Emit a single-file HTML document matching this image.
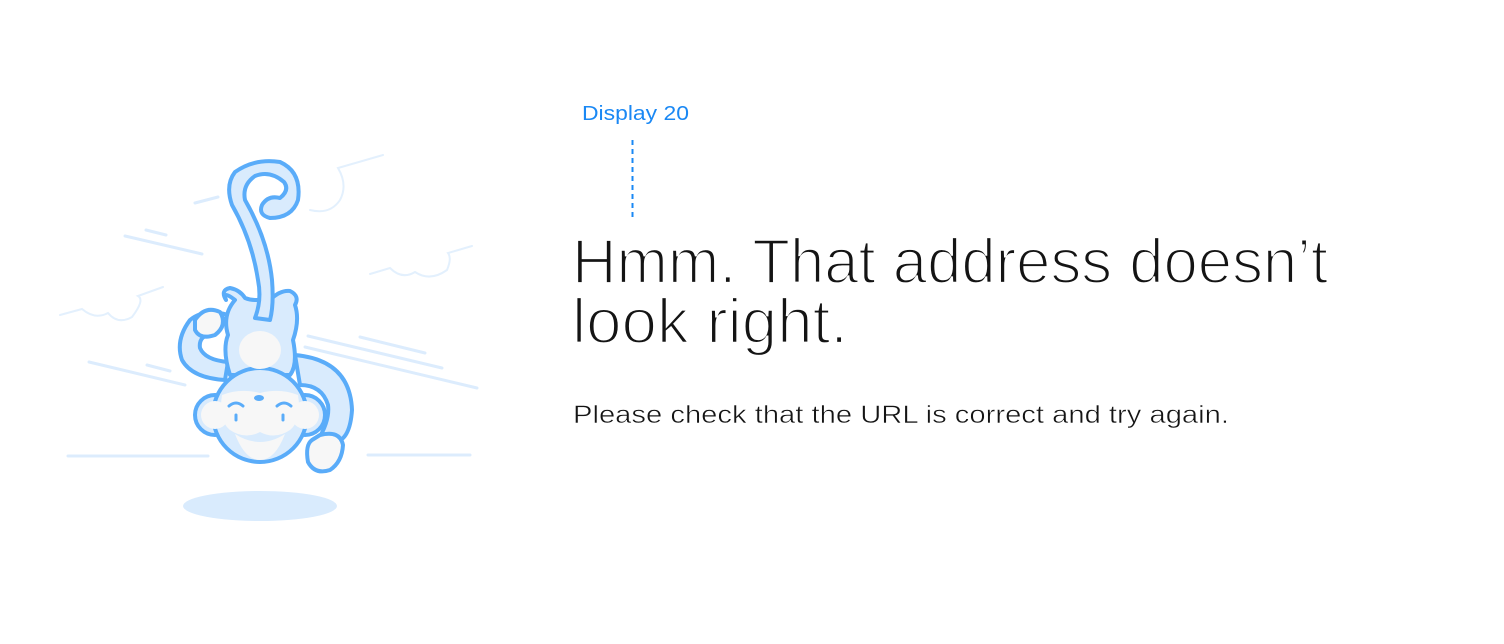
<!DOCTYPE html>
<html><head><meta charset="utf-8"><style>
html,body{margin:0;padding:0;background:#fff;width:1504px;height:644px;overflow:hidden}
svg{position:absolute;left:0;top:0}
</style></head><body>
<svg width="1504" height="644" viewBox="0 0 1504 644" xmlns="http://www.w3.org/2000/svg">
<g stroke="#dcecfd" stroke-width="3" fill="none" stroke-linecap="round">
<line x1="125" y1="236" x2="202" y2="254"/>
<line x1="146" y1="230" x2="166" y2="235"/>
<line x1="89" y1="362" x2="185" y2="385"/>
<line x1="147" y1="365" x2="170" y2="371"/>
<line x1="308" y1="336" x2="442" y2="368"/>
<line x1="360" y1="337" x2="425" y2="353"/>
<line x1="305" y1="347" x2="477" y2="388"/>
<line x1="68" y1="456" x2="208" y2="456"/>
<line x1="368" y1="455" x2="470" y2="455"/>
<line x1="195" y1="203" x2="218" y2="197"/>
</g>
<g stroke="#e3f0fd" stroke-width="2" fill="none" stroke-linecap="round">
<path d="M60 315 L82 309 Q95 320 108 313 Q118 325 132 317 Q145 300 138 296 L163 287"/>
<path d="M370 274 L390 268 Q402 280 415 272 Q430 282 447 270 Q452 258 448 253 L472 246"/>
<path d="M310 210 Q330 215 340 200 Q348 185 338 168 L383 155"/>
</g>
<ellipse cx="260" cy="506" rx="77" ry="15" fill="#d9ebfd"/>
<g stroke="#5aacf9" stroke-width="4" stroke-linejoin="round" stroke-linecap="round" fill="#d9ebfd">
<path d="M295 355 Q350 360 352 410 Q350 440 335 442 L318 440 Q330 420 328 405 Q322 385 300 385 Z"/>
<path d="M320 435 Q340 430 343 445 Q342 462 330 470 Q315 475 308 462 Q305 445 312 440 Z" fill="#f7f7f7"/>
<path d="M228 315 Q205 308 190 320 Q175 340 182 360 Q192 378 225 380 L228 362 Q205 360 200 348 Q198 335 215 333 Z"/>
<path d="M195 320 Q205 305 220 312 Q228 325 215 335 Q200 340 195 330 Z" fill="#f7f7f7"/>
<path d="M235 300 Q222 290 226 300 Q220 290 230 288 Q240 290 245 298 Q250 300 255 300 L270 300 Q280 290 290 291 Q300 296 295 305 Q300 320 293 340 Q298 365 290 375 L230 375 Q222 350 228 335 Q222 315 235 300 Z"/>
<path d="M255 318 Q262 300 258 280 Q252 240 232 205 Q225 185 235 172 Q255 158 280 162 Q302 172 298 200 Q292 218 270 218 Q258 215 262 205 Q268 195 280 198 Q290 190 284 182 Q270 170 255 176 Q242 185 245 200 Q268 240 272 280 Q274 305 270 320 Z"/>
<circle cx="215" cy="415" r="20"/>
<circle cx="305" cy="415" r="20"/>
<circle cx="260" cy="415" r="47"/>
</g>
<circle cx="215" cy="415" r="14" fill="#f7f7f7"/>
<circle cx="305" cy="415" r="14" fill="#f7f7f7"/>
<ellipse cx="260" cy="350" rx="21" ry="19" fill="#f7f7f7"/>
<path d="M222 395 Q240 388 260 393 Q280 388 298 395 Q302 420 290 430 Q275 440 260 432 Q245 440 230 430 Q218 420 222 395 Z" fill="#f7f7f7"/>
<path d="M235 434 Q260 450 285 434 Q275 460 260 460 Q245 460 235 434 Z" fill="#f7f7f7"/>
<g stroke="#5aacf9" stroke-width="3" fill="none" stroke-linecap="round">
<path d="M229 406 Q236 400 243 406"/>
<path d="M277 406 Q284 400 291 406"/>
<line x1="236" y1="415" x2="236" y2="420"/>
<line x1="283" y1="415" x2="283" y2="420"/>
</g>
<ellipse cx="259" cy="398" rx="5" ry="3" fill="#5aacf9"/>
<text x="582" y="120" font-family="Liberation Sans, sans-serif" font-size="20" fill="#1a88f4" textLength="107" lengthAdjust="spacingAndGlyphs">Display 20</text>
<line x1="632.5" y1="140" x2="632.5" y2="218" stroke="#1a88f4" stroke-width="2" stroke-dasharray="5,4"/>
<g font-family="Liberation Sans, sans-serif" fill="#141414">
<g stroke="#fff" stroke-width="2.2">
<text x="572" y="283" font-size="63" textLength="756" lengthAdjust="spacingAndGlyphs">Hmm. That address doesn’t</text>
<text x="572" y="343" font-size="63" textLength="276" lengthAdjust="spacingAndGlyphs">look right.</text>
</g>
<text x="573" y="423" font-size="25" textLength="656" lengthAdjust="spacingAndGlyphs" stroke="#fff" stroke-width="0.5">Please check that the URL is correct and try again.</text>
</g>
</svg>
</body></html>
